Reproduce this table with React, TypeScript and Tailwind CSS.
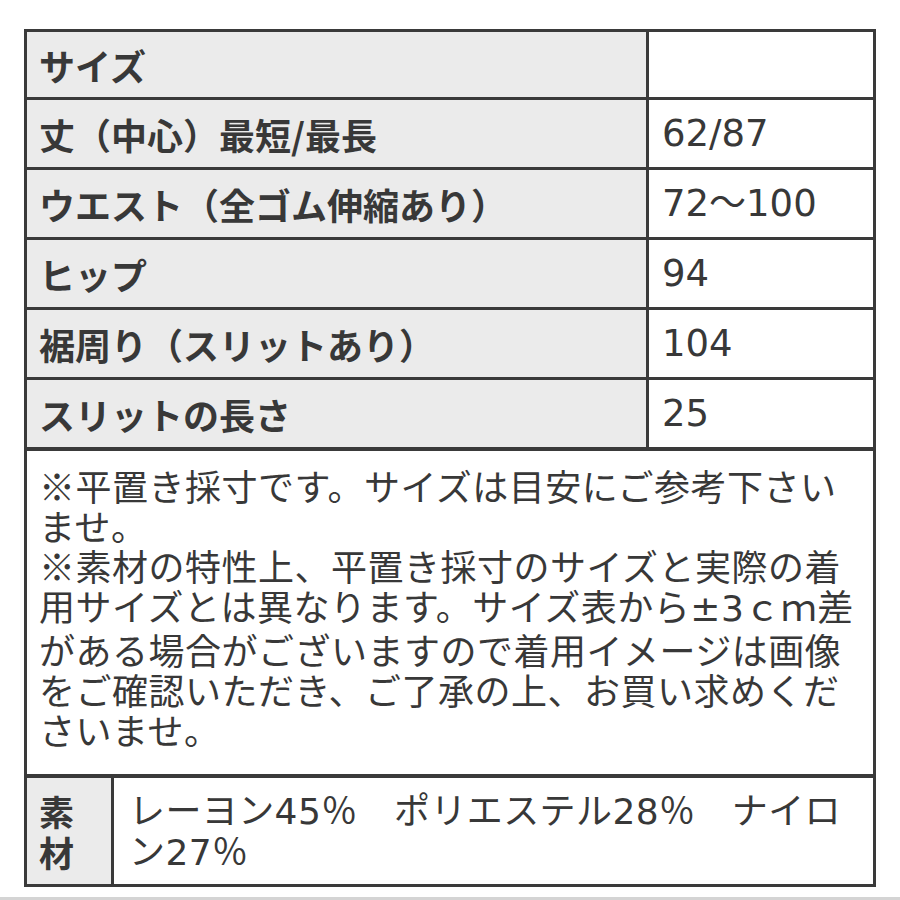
const rows: [string, string][] = [
  ['サイズ', ''],
  ['丈（中心）最短/最長', '62/87'],
  ['ウエスト（全ゴム伸縮あり）', '72〜100'],
  ['ヒップ', '94'],
  ['裾周り（スリットあり）', '104'],
  ['スリットの長さ', '25'],
];

const noteLines = [
  '※平置き採寸です。サイズは目安にご参考下さい',
  'ませ。',
  '※素材の特性上、平置き採寸のサイズと実際の着',
  null,
  'がある場合がございますので着用イメージは画像',
  'をご確認いただき、ご了承の上、お買い求めくだ',
  'さいませ。',
];

const jp = "font-['Noto_Sans_CJK_JP',sans-serif]";

export default function App() {
  return (
    <div className="flex h-[900px] flex-col bg-white pt-[29px] text-[#383838]">
      <div className="ml-[24px] w-[852px] border-[3px] border-[#3a3a3a]">
        {rows.map(([label, value], i) => (
          <div
            key={label}
            className={
              i === 0
                ? 'flex h-[68px] border-b-[3px] border-[#3a3a3a]'
                : i === rows.length - 1
                  ? 'flex h-[71px] border-b-4 border-[#3a3a3a]'
                  : 'flex h-[70px] border-b-[3px] border-[#3a3a3a]'
            }
          >
            <div
              className={`flex w-[622px] shrink-0 items-center border-r-[3px] border-[#3a3a3a] bg-[#ebebeb] pl-[12px] text-[36px] leading-none font-bold ${jp}`}
            >
              {label}
            </div>
            <div className="flex flex-1 items-center pl-[13px] font-['DejaVu_Sans','Noto_Sans_CJK_JP',sans-serif] text-[37px] leading-none">
              {value}
            </div>
          </div>
        ))}

        <div
          className={`border-b-4 border-[#3a3a3a] pt-[14px] pb-[25px] pl-[12px] text-[36px] leading-[40px] tracking-[0.5px] whitespace-nowrap ${jp}`}
        >
          {noteLines.map((line, i) =>
            line === null ? (
              <div key={i}>
                用サイズとは異なります。サイズ表から
                <span className="font-['DejaVu_Sans',sans-serif]">±3</span>ｃｍ差
              </div>
            ) : (
              <div key={i}>{line}</div>
            ),
          )}
        </div>

        <div className="flex">
          <div
            className={`w-[87px] shrink-0 border-r-[3px] border-[#3a3a3a] bg-[#ebebeb] pt-[12px] pb-[12px] pl-[12px] text-[35px] leading-[41px] font-bold ${jp}`}
          >
            <div>素</div>
            <div>材</div>
          </div>
          <div className="flex-1 pt-[13px] pl-[15px] font-['DejaVu_Sans','Noto_Sans_CJK_JP',sans-serif] text-[36px] leading-[41px] tracking-[0.4px] whitespace-nowrap">
            <div>レーヨン45％　ポリエステル28％　ナイロ</div>
            <div>ン27％</div>
          </div>
        </div>
      </div>
      <div className="mt-auto h-[3px] bg-[#d4d4d4]" />
    </div>
  );
}
